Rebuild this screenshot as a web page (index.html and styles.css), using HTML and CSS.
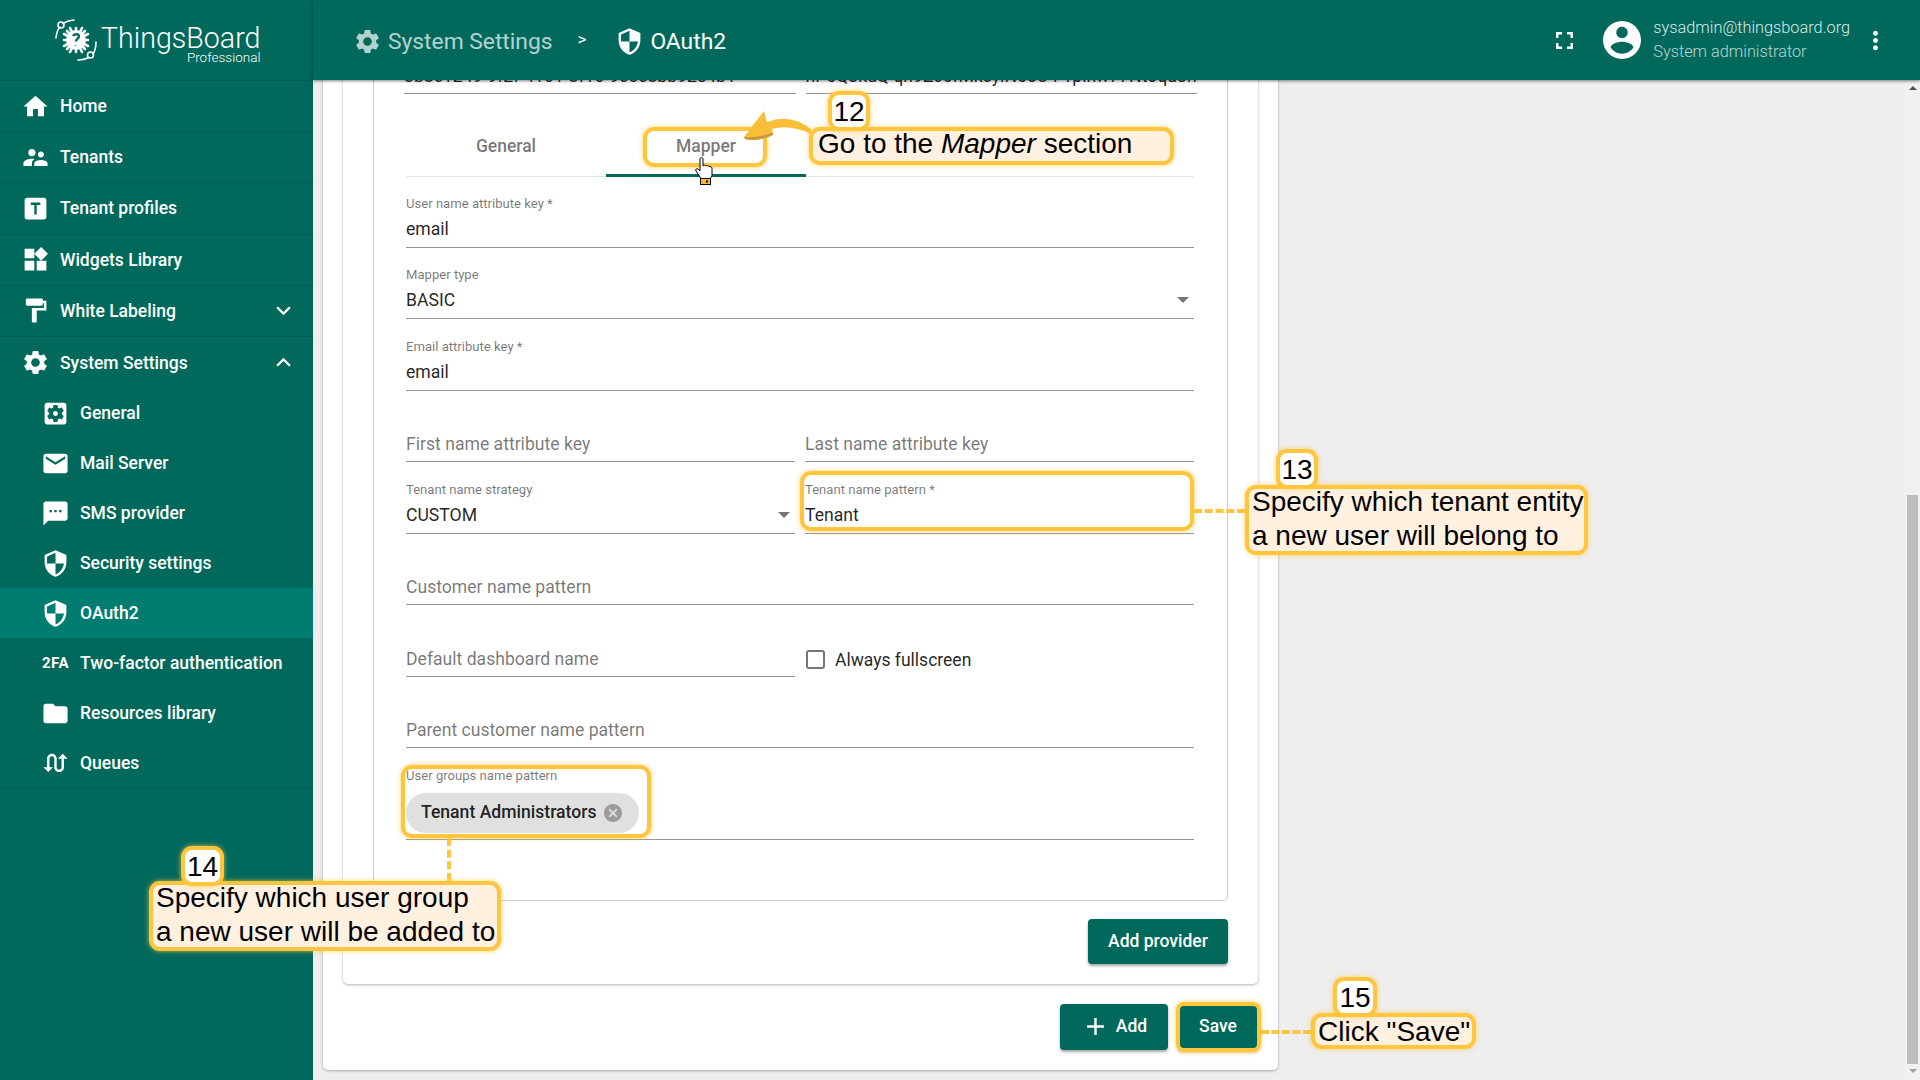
FILE: index.html
```html
<!DOCTYPE html>
<html lang="en">
<head>
    <meta charset="UTF-8">
    <meta name="viewport" content="width=device-width, initial-scale=1.0">
    <title>ThingsBoard - OAuth2</title>
    <link rel="stylesheet" href="styles.css">
</head>
<body>
    <!-- icons used more than once -->
    <svg class="defs" aria-hidden="true">
        <symbol id="i-gear" viewBox="0 0 24 24"><path d="M19.14 12.94c.04-.3.06-.61.06-.94 0-.32-.02-.64-.07-.94l2.03-1.58c.18-.14.23-.41.12-.61l-1.92-3.32c-.12-.22-.37-.29-.59-.22l-2.39.96c-.5-.38-1.03-.7-1.62-.94l-.36-2.54c-.04-.24-.24-.41-.48-.41h-3.84c-.24 0-.43.17-.47.41l-.36 2.54c-.59.24-1.13.57-1.62.94l-2.39-.96c-.22-.08-.47 0-.59.22L2.74 8.87c-.12.21-.08.47.12.61l2.03 1.58c-.05.3-.09.63-.09.94s.02.64.07.94l-2.03 1.58c-.18.14-.23.41-.12.61l1.92 3.32c.12.22.37.29.59.22l2.39-.96c.5.38 1.03.7 1.62.94l.36 2.54c.05.24.24.41.48.41h3.84c.24 0 .44-.17.47-.41l.36-2.54c.59-.24 1.13-.56 1.62-.94l2.39.96c.22.08.47 0 .59-.22l1.92-3.32c.12-.22.07-.47-.12-.61l-2.01-1.58zM12 15.6c-1.98 0-3.6-1.62-3.6-3.6s1.62-3.6 3.6-3.6 3.6 1.62 3.6 3.6-1.62 3.6-3.6 3.6z"/></symbol>
        <symbol id="i-shield" viewBox="0 0 24 24"><path d="M12 1L3 5v6c0 5.55 3.84 10.74 9 12 5.16-1.26 9-6.45 9-12V5l-9-4zm0 10.99h7c-.53 4.12-3.28 7.79-7 8.94V12H5V6.3l7-3.11v8.8z"/></symbol>
    </svg>

    <aside class="sidebar">
        <div class="logo">
            <svg class="logo-mark" viewBox="0 0 44 44">
                <g fill="none" stroke="#fff" stroke-width="1.6" stroke-linecap="round">
                    <path d="M2 20C2.500 15 4 11 6 9M9 5.500C12 3.500 16 2.500 20 2"/>
                    <circle cx="7" cy="7" r="3"/>
                    <path d="M42 24C42 29 41 33 39 36M35 39.500C31 41.500 27 42 24 42"/>
                    <circle cx="36.500" cy="37" r="3"/>
                </g>
                <g stroke="#fff" stroke-width="2.600" stroke-linecap="round">
                    <path d="M22 10v24M10 22h24M13 13l18 18M31 13L13 31M16 10l12 24M28 10L16 34M10 16l24 12M34 16L10 28"/>
                </g>
                <circle cx="22" cy="22" r="10" fill="#fff"/>
                <path d="M19 18c1-2.500 6-2.500 6 .5 0 2-3 2.500-3 5M21.500 27v.5" fill="none" stroke="#00695c" stroke-width="2.400"/>
            </svg>
            <div class="logo-text">
                <span class="logo-name">ThingsBoard</span>
                <span class="logo-sub">Professional</span>
            </div>
        </div>
        <nav>
            <a class="nav-item">
                <svg class="nav-icon" viewBox="0 0 24 24"><path d="M10 20v-6h4v6h5v-8h3L12 3 2 12h3v8z"/></svg>
                Home
            </a>
            <a class="nav-item">
                <svg class="nav-icon" viewBox="0 0 24 24"><path d="M16.500 12c1.380 0 2.490-1.120 2.490-2.500S17.880 7 16.500 7 14 8.120 14 9.500s1.120 2.500 2.500 2.500zM9 11c1.660 0 2.990-1.340 2.990-3S10.660 5 9 5 6 6.340 6 8s1.340 3 3 3zm7.500 3c-1.830 0-5.500.92-5.500 2.750V19h11v-2.250c0-1.830-3.670-2.750-5.500-2.750zM9 13c-2.330 0-7 1.170-7 3.500V19h7v-2.250c0-.85.33-2.340 2.370-3.470C10.500 13.100 9.660 13 9 13z"/></svg>
                Tenants
            </a>
            <a class="nav-item">
                <svg class="nav-icon" viewBox="0 0 24 24"><path d="M19 3H5c-1.100 0-2 .9-2 2v14c0 1.100.9 2 2 2h14c1.100 0 2-.9 2-2V5c0-1.100-.9-2-2-2zm-3 6h-3v8h-2V9H8V7h8v2z"/></svg>
                Tenant profiles
            </a>
            <a class="nav-item">
                <svg class="nav-icon" viewBox="0 0 24 24"><path d="M13 13v8h8v-8h-8zM3 21h8v-8H3v8zM3 3v8h8V3H3zm13.660-1.310L11 7.340 16.660 13l5.660-5.660-5.660-5.650z"/></svg>
                Widgets Library
            </a>
            <a class="nav-item">
                <svg class="nav-icon" viewBox="0 0 24 24"><path d="M18 4V3c0-.55-.45-1-1-1H5c-.55 0-1 .45-1 1v4c0 .55.45 1 1 1h12c.55 0 1-.45 1-1V6h1v4H9v11c0 .55.45 1 1 1h2c.55 0 1-.45 1-1v-9h8V4h-3z"/></svg>
                White Labeling
                <svg class="nav-arrow" viewBox="0 0 24 24"><path d="M16.590 8.590L12 13.170 7.410 8.590 6 10l6 6 6-6z"/></svg>
            </a>
            <a class="nav-item nav-open">
                <svg class="nav-icon"><use href="#i-gear"/></svg>
                System Settings
                <svg class="nav-arrow" viewBox="0 0 24 24"><path d="M12 8l-6 6 1.410 1.410L12 10.830l4.590 4.580L18 14z"/></svg>
            </a>
            <div class="subnav">
                <a class="sub-item">
                    <svg class="nav-icon" viewBox="0 0 24 24"><path d="M12 10c-1.100 0-2 .9-2 2s.9 2 2 2 2-.9 2-2-.9-2-2-2zm7-7H5c-1.100 0-2 .9-2 2v14c0 1.100.9 2 2 2h14c1.100 0 2-.9 2-2V5c0-1.100-.9-2-2-2zm-1.750 9c0 .23-.02.46-.05.68l1.480 1.160c.13.11.17.3.08.45l-1.400 2.420c-.09.15-.27.21-.43.15l-1.740-.7c-.36.28-.76.51-1.180.69l-.26 1.850c-.03.17-.18.3-.35.3h-2.800c-.17 0-.32-.13-.35-.29l-.26-1.850c-.43-.18-.82-.41-1.180-.69l-1.740.7c-.16.06-.34 0-.43-.15l-1.400-2.420c-.09-.15-.05-.34.08-.45l1.480-1.160c-.03-.23-.05-.46-.05-.69 0-.23.02-.46.05-.68l-1.480-1.160c-.13-.11-.17-.3-.08-.45l1.400-2.420c.09-.15.27-.21.43-.15l1.740.7c.36-.28.76-.51 1.180-.69l.26-1.850c.03-.17.18-.3.35-.3h2.800c.17 0 .32.13.35.29l.26 1.850c.43.18.82.41 1.180.69l1.740-.7c.16-.06.34 0 .43.15l1.400 2.420c.09.15.05.34-.08.45l-1.480 1.160c.03.23.05.46.05.69z"/></svg>
                    General
                </a>
                <a class="sub-item">
                    <svg class="nav-icon" viewBox="0 0 24 24"><path d="M20 4H4c-1.100 0-1.990.9-1.990 2L2 18c0 1.100.9 2 2 2h16c1.100 0 2-.9 2-2V6c0-1.100-.9-2-2-2zm0 4l-8 5-8-5V6l8 5 8-5v2z"/></svg>
                    Mail Server
                </a>
                <a class="sub-item">
                    <svg class="nav-icon" viewBox="0 0 24 24"><path d="M20 2H4c-1.100 0-1.990.9-1.990 2L2 22l4-4h14c1.100 0 2-.9 2-2V4c0-1.100-.9-2-2-2zM9 11H7V9h2v2zm4 0h-2V9h2v2zm4 0h-2V9h2v2z"/></svg>
                    SMS provider
                </a>
                <a class="sub-item">
                    <svg class="nav-icon"><use href="#i-shield"/></svg>
                    Security settings
                </a>
                <a class="sub-item sub-active">
                    <svg class="nav-icon"><use href="#i-shield"/></svg>
                    OAuth2
                </a>
                <a class="sub-item">
                    <span class="nav-icon tfa">2FA</span>
                    Two-factor authentication
                </a>
                <a class="sub-item">
                    <svg class="nav-icon" viewBox="0 0 24 24"><path d="M10 4H4c-1.100 0-1.990.9-1.990 2L2 18c0 1.100.9 2 2 2h16c1.100 0 2-.9 2-2V8c0-1.100-.9-2-2-2h-8l-2-2z"/></svg>
                    Resources library
                </a>
                <a class="sub-item">
                    <svg class="nav-icon" viewBox="0 0 24 24"><path d="M18 4l-4 4h3v7c0 1.100-.9 2-2 2s-2-.9-2-2V8c0-2.210-1.790-4-4-4S5 5.790 5 8v7H2l4 4 4-4H7V8c0-1.100.9-2 2-2s2 .9 2 2v7c0 2.210 1.790 4 4 4s4-1.790 4-4V8h3l-4-4z"/></svg>
                    Queues
                </a>
            </div>
        </nav>
    </aside>

    <div class="main">
        <header class="topbar">
            <svg class="crumb-icon crumb-dim"><use href="#i-gear"/></svg>
            <span class="crumb crumb-dim">System Settings</span>
            <span class="crumb-sep">&gt;</span>
            <svg class="crumb-icon"><use href="#i-shield"/></svg>
            <span class="crumb">OAuth2</span>
            <svg class="fullscreen" viewBox="0 0 24 24"><path d="M7 14H5v5h5v-2H7v-3zm-2-4h2V7h3V5H5v5zm12 7h-3v2h5v-5h-2v3zM14 5v2h3v3h2V5h-5z"/></svg>
            <svg class="avatar" viewBox="2 2 20 20"><path d="M12 2C6.480 2 2 6.480 2 12s4.480 10 10 10 10-4.480 10-10S17.520 2 12 2zm0 3c1.660 0 3 1.340 3 3s-1.340 3-3 3-3-1.340-3-3 1.340-3 3-3zm0 14.200c-2.500 0-4.710-1.280-6-3.220.03-1.990 4-3.080 6-3.080 1.990 0 5.970 1.090 6 3.080-1.290 1.940-3.500 3.220-6 3.220z"/></svg>
            <div class="user">
                <span class="user-mail">sysadmin@thingsboard.org</span>
                <span class="user-role">System administrator</span>
            </div>
            <svg class="more" viewBox="0 0 24 24"><path d="M12 8c1.100 0 2-.9 2-2s-.9-2-2-2-2 .9-2 2 .9 2 2 2zm0 2c-1.100 0-2 .9-2 2s.9 2 2 2 2-.9 2-2-.9-2-2-2zm0 6c-1.100 0-2 .9-2 2s.9 2 2 2 2-.9 2-2-.9-2-2-2z"/></svg>
        </header>

        <div class="body-row">
            <main class="content">
                <section class="page-card">
                    <div class="domain-card">
                        <div class="provider">
                            <div class="row row-wide">
                                <div class="field"><span class="value">3b8c1249-9f2f-4101-8f10-9c6c8bb92e4b1</span></div>
                                <div class="field"><span class="value">nP6Q3kdQ qh9Zc6fMkcyiN65U4 1plhw77Ntoqu3h</span></div>
                            </div>

                            <div class="tabs">
                                <div class="tab">General</div>
                                <div class="tab tab-active">Mapper</div>
                            </div>

                            <div class="field"><label>User name attribute key *</label><span class="value">email</span></div>
                            <div class="field select"><label>Mapper type</label><span class="value">BASIC</span></div>
                            <div class="field"><label>Email attribute key *</label><span class="value">email</span></div>
                            <div class="row">
                                <div class="field"><span class="value hint">First name attribute key</span></div>
                                <div class="field"><span class="value hint">Last name attribute key</span></div>
                            </div>
                            <div class="row">
                                <div class="field select"><label>Tenant name strategy</label><span class="value">CUSTOM</span></div>
                                <div class="field"><label>Tenant name pattern *</label><span class="value">Tenant</span></div>
                            </div>
                            <div class="field"><span class="value hint">Customer name pattern</span></div>
                            <div class="row">
                                <div class="field"><span class="value hint">Default dashboard name</span></div>
                                <div class="check"><span class="box"></span>Always fullscreen</div>
                            </div>
                            <div class="field"><span class="value hint">Parent customer name pattern</span></div>
                            <div class="field field-chips">
                                <label>User groups name pattern</label>
                                <span class="chip">
                                    Tenant Administrators
                                    <svg class="chip-x" viewBox="2 2 20 20"><path d="M12 2C6.470 2 2 6.470 2 12s4.470 10 10 10 10-4.470 10-10S17.530 2 12 2zm5 13.590L15.590 17 12 13.410 8.410 17 7 15.590 10.590 12 7 8.410 8.410 7 12 10.590 15.590 7 17 8.410 13.410 12 17 15.590z"/></svg>
                                </span>
                            </div>
                        </div>
                        <div class="card-actions">
                            <button class="btn btn-provider">Add provider</button>
                        </div>
                    </div>
                    <div class="page-actions">
                        <button class="btn btn-add">
                            <svg class="plus" viewBox="0 0 24 24"><path d="M19 13h-6v6h-2v-6H5v-2h6V5h2v6h6v2z"/></svg>
                            Add
                        </button>
                        <button class="btn btn-save">Save</button>
                    </div>
                </section>
            </main>
            <div class="scrollbar">
                <span class="scroll-up"></span>
                <span class="scroll-thumb"></span>
                <span class="scroll-down"></span>
            </div>
        </div>
    </div>

    <!-- tutorial marks over the page -->
    <div class="mark mark-mapper"></div>
    <svg class="arrow" viewBox="0 0 75 35">
        <path d="M4 29L24 3l3 11Q50 5 71 21l0 5Q50 16 32 21l1 6Q18 34 5 31z" fill="#f9be38"/>
        <path d="M5 31Q18 34 33 27l-.3-2.500Q18 30 4 29z" fill="#c9963a"/>
    </svg>
    <svg class="cursor" viewBox="0 0 18 28">
        <path d="M5 2c0-2 3-2 3 0v7c1-1 2-1 3 0 1-.5 2-.5 3 .5 1-.5 3 0 3 2v6c0 2-1 3-2 4H6L1 14c-1-2 1-3 2-2l2 2z" fill="#fff" stroke="#000"/>
        <rect x="5.500" y="21.500" width="10" height="6" fill="#f6b73c" stroke="#000"/>
        <rect x="11" y="23.500" width="2" height="2" fill="#000"/>
    </svg>
    <div class="badge badge-12">12</div>
    <div class="note note-12">Go to the <i>Mapper</i> section</div>

    <div class="mark mark-tenant"></div>
    <div class="dash dash-13"></div>
    <div class="badge badge-13">13</div>
    <div class="note note-13">Specify which tenant entity<br>a new user will belong to</div>

    <div class="mark mark-groups"></div>
    <div class="dash-v dash-14"></div>
    <div class="badge badge-14">14</div>
    <div class="note note-14">Specify which user group<br>a new user will be added to</div>

    <div class="mark mark-save"></div>
    <div class="dash dash-15"></div>
    <div class="badge badge-15">15</div>
    <div class="note note-15">Click "Save"</div>
</body>
</html>
```

FILE: styles.css
```css
* {
    box-sizing: border-box;
}
body {
    font-family: Roboto, "Noto Sans", sans-serif;
    background-color: #eee;
    color: rgba(0, 0, 0, 0.87);
    margin: 0;
    height: 100vh;
    display: flex;
    overflow: hidden;
}
.defs {
    position: absolute;
    width: 0;
    height: 0;
}

/* sidebar */
.sidebar {
    width: 313px;
    flex: none;
    background-color: #00695c;
    color: #fff;
}
.logo {
    height: 81px;
    display: flex;
    padding: 18px 0 0 54px;
    border-bottom: 1px solid rgba(0, 0, 0, 0.12);
}
.logo-mark {
    width: 44px;
    height: 44px;
    flex: none;
}
.logo-text {
    display: flex;
    flex-direction: column;
    align-items: flex-end;
    margin-left: 3px;
}
.logo-name {
    font-size: 28.600px;
    font-weight: 300;
    line-height: 23px;
    margin-top: 9px;
}
.logo-sub {
    font-size: 13.500px;
    font-weight: 300;
    line-height: 14px;
}
.nav-item {
    display: flex;
    align-items: center;
    height: 51.200px;
    padding-left: 24px;
    font-size: 17.500px;
    font-weight: 500;
    border-bottom: 1px solid rgba(0, 0, 0, 0.12);
}
.nav-open {
    border-bottom: 0;
}
.nav-icon {
    width: 29px;
    height: 29px;
    flex: none;
    margin-right: 10px;
    margin-left: -3px;
    fill: #fff;
}
.nav-arrow {
    width: 29px;
    height: 29px;
    margin-left: auto;
    margin-right: 15px;
    fill: #fff;
}
.subnav {
    border-bottom: 1px solid rgba(0, 0, 0, 0.12);
}
.sub-item {
    display: flex;
    align-items: center;
    height: 50px;
    padding-left: 44px;
    font-size: 17.500px;
    font-weight: 500;
}
.sub-active {
    background-color: #007d70;
}
.tfa {
    font-size: 15px;
    font-weight: 700;
    line-height: 29px;
    letter-spacing: 0.500px;
    text-align: center;
}

/* top bar */
.main {
    flex: 1;
    min-width: 0;
    display: flex;
    flex-direction: column;
}
.topbar {
    height: 80px;
    flex: none;
    display: flex;
    align-items: center;
    padding: 2px 0 0 40px;
    background-color: #00695c;
    color: #fff;
    box-shadow: 0 1px 3px rgba(0, 0, 0, 0.5);
    position: relative;
    z-index: 2;
}
.crumb-icon {
    width: 29px;
    height: 29px;
    flex: none;
    fill: #fff;
    margin-right: 6px;
}
.crumb {
    font-size: 22.800px;
}
.crumb-dim {
    opacity: 0.7;
}
.crumb-sep {
    font-size: 17px;
    margin: -4px 29px 0 25px;
}
.fullscreen {
    width: 29px;
    height: 29px;
    fill: #fff;
    margin: -2px 0 0 auto;
}
.avatar {
    width: 38px;
    height: 38px;
    fill: #fff;
    margin: -2px 0 0 24px;
}
.user {
    display: flex;
    flex-direction: column;
    gap: 7px;
    margin: -4px 0 0 12.500px;
    font-size: 16.300px;
    font-weight: 300;
    line-height: 17px;
}
.user-mail {
    opacity: 0.85;
}
.user-role {
    opacity: 0.7;
}
.more {
    width: 29px;
    height: 29px;
    fill: #fff;
    margin: -2px 30px 0 11px;
}

/* page */
.body-row {
    flex: 1;
    min-height: 0;
    display: flex;
}
.content {
    flex: 1;
    min-width: 0;
    overflow: hidden;
    display: flex;
    flex-direction: column;
    justify-content: flex-end;
    align-items: flex-start;
    padding: 0 0 10px 10px;
}
.page-card {
    width: 955px;
    flex: none;
    background-color: #fff;
    border-radius: 5px;
    padding: 0 20px 20px;
    box-shadow: 0 1px 3px rgba(0, 0, 0, 0.3);
}
.domain-card {
    border-radius: 5px;
    padding: 0 30px 20px;
    box-shadow: 0 1px 3px rgba(0, 0, 0, 0.3);
}
.provider {
    border: 1px solid #ccc;
    border-top: 0;
    border-radius: 0 0 5px 5px;
    padding: 0 33px 60px 32px;
}
.row {
    display: grid;
    grid-template-columns: 1fr 1fr;
    column-gap: 10px;
}
.row-wide {
    margin: 0 -3px 0 -2px;
}
.row-wide .field {
    margin-bottom: 0;
}
.tabs {
    display: flex;
    margin: 24px 0 19px;
    border-bottom: 1px solid #e0e0e0;
}
.tab {
    width: 200px;
    height: 59px;
    display: flex;
    align-items: center;
    justify-content: center;
    font-size: 17.500px;
    font-weight: 500;
    color: rgba(0, 0, 0, 0.54);
    border-bottom: 3px solid transparent;
    margin-bottom: -1px;
}
.tab-active {
    border-bottom-color: #00695c;
}

/* form fields */
.field {
    height: 51.500px;
    margin-bottom: 20px;
    display: flex;
    flex-direction: column;
    justify-content: flex-end;
    border-bottom: 1px solid #949494;
    padding-bottom: 5px;
    position: relative;
}
.field label {
    font-size: 13.100px;
    line-height: 16px;
    color: rgba(0, 0, 0, 0.54);
    margin-bottom: 5px;
}
.field label + .value {
    margin-bottom: 1px;
}
.value {
    font-size: 17.600px;
    line-height: 24px;
    white-space: nowrap;
}
.hint {
    color: rgba(0, 0, 0, 0.54);
}
.select::after {
    content: "";
    position: absolute;
    right: 5px;
    bottom: 15px;
    border: 6px solid transparent;
    border-top-color: rgba(0, 0, 0, 0.54);
    border-bottom: 0;
}
.field-chips {
    height: 72px;
    margin-bottom: 0;
    justify-content: flex-start;
    padding: 0;
}
.field-chips label {
    margin-bottom: 9px;
}
.chip {
    align-self: flex-start;
    display: flex;
    align-items: center;
    height: 40px;
    padding: 0 17px 2px 15px;
    background-color: #e0e0e0;
    border-radius: 20px;
    font-size: 17.600px;
    font-weight: 500;
}
.chip-x {
    width: 18px;
    height: 18px;
    margin: 2px 0 0 7px;
    fill: #9b9b9b;
}
.check {
    display: flex;
    align-items: center;
    height: 51px;
    font-size: 17.500px;
    padding-top: 18px;
}
.box {
    width: 19px;
    height: 19px;
    border: 2px solid rgba(0, 0, 0, 0.54);
    border-radius: 3px;
    margin: 0 10px 0 1px;
}

/* buttons */
.btn {
    border: 0;
    border-radius: 4px;
    background-color: #00695c;
    color: #fff;
    font-family: inherit;
    font-size: 17.500px;
    font-weight: 500;
    display: flex;
    align-items: center;
    justify-content: center;
    padding: 0 0 2px;
    box-shadow: 0 2px 3px rgba(0, 0, 0, 0.35);
}
.card-actions {
    display: flex;
    justify-content: flex-end;
    margin-top: 18px;
}
.btn-provider {
    width: 140px;
    height: 45px;
}
.page-actions {
    display: flex;
    justify-content: flex-end;
    gap: 10px;
    margin-top: 20px;
}
.btn-add {
    width: 108px;
    height: 46px;
}
.plus {
    width: 29px;
    height: 29px;
    fill: #fff;
    margin-right: 6px;
}
.btn-save {
    width: 80px;
    height: 46px;
}

/* scrollbar */
.scrollbar {
    width: 15px;
    flex: none;
    display: flex;
    flex-direction: column;
    align-items: center;
    background-color: #f1f1f1;
}
.scroll-thumb {
    width: 11px;
    height: 569px;
    margin-top: 405px;
    background-color: #bdbdbd;
}
.scroll-up {
    margin-top: 6px;
    border: 4px solid transparent;
    border-bottom: 4px solid #505050;
    border-top: 0;
}
.scroll-down {
    margin-top: 5px;
    border: 4px solid transparent;
    border-top: 4px solid #a0a0a0;
    border-bottom: 0;
}

/* tutorial marks */
.mark,
.badge,
.note {
    position: absolute;
    border: 4px solid #ffc53d;
    border-radius: 11px;
    box-shadow: 0 0 5px rgba(255, 197, 61, 0.8);
    z-index: 5;
}
.mark-mapper { left: 643px; top: 127px; width: 124px; height: 40px; }
.mark-tenant { left: 800px; top: 471px; width: 394px; height: 60px; }
.mark-groups { left: 401px; top: 765px; width: 250px; height: 73px; }
.mark-save { left: 1176px; top: 1002px; width: 85px; height: 50px; border-radius: 8px; }
.badge {
    background-color: #fff;
    color: #000;
    font-family: "Liberation Sans", Arial, sans-serif;
    font-size: 28px;
    line-height: 34px;
    text-align: center;
    height: 40px;
    z-index: 7;
}
.badge-12 { left: 828px; top: 91px; width: 42px; }
.badge-13 { left: 1276px; top: 449px; width: 42px; }
.badge-14 { left: 181px; top: 846px; width: 43px; }
.badge-15 { left: 1333px; top: 977px; width: 44px; }
.note {
    background-color: #fff0e0;
    color: #000;
    font-family: "Liberation Sans", Arial, sans-serif;
    font-size: 28px;
    line-height: 34px;
    white-space: nowrap;
    padding: 0 0 0 3px;
    z-index: 6;
}
/* pulls the lines up inside the box */
.note::before {
    content: "";
    display: block;
    margin-top: -4px;
}
.note-12 { left: 809px; top: 127px; width: 365px; height: 38px; padding-left: 5px; }
.note-13 { left: 1245px; top: 485px; width: 343px; height: 70px; }
.note-14 { left: 149px; top: 881px; width: 352px; height: 70px; }
.note-15 { left: 1311px; top: 1013px; width: 165px; height: 36px; }
.note-15::before { margin-top: -2px; }
.dash {
    position: absolute;
    height: 0;
    border-top: 4px dashed #ffc53d;
    z-index: 5;
}
.dash-13 { left: 1194px; top: 509px; width: 51px; }
.dash-15 { left: 1261px; top: 1030px; width: 50px; }
.dash-v {
    position: absolute;
    width: 0;
    border-left: 4px dashed #ffc53d;
    z-index: 5;
}
.dash-14 { left: 447px; top: 838px; height: 43px; }
.arrow {
    position: absolute;
    left: 740px;
    top: 108px;
    width: 75px;
    height: 35px;
    z-index: 8;
}
.cursor {
    position: absolute;
    left: 695px;
    top: 157px;
    width: 18px;
    height: 28px;
    z-index: 8;
}
```
